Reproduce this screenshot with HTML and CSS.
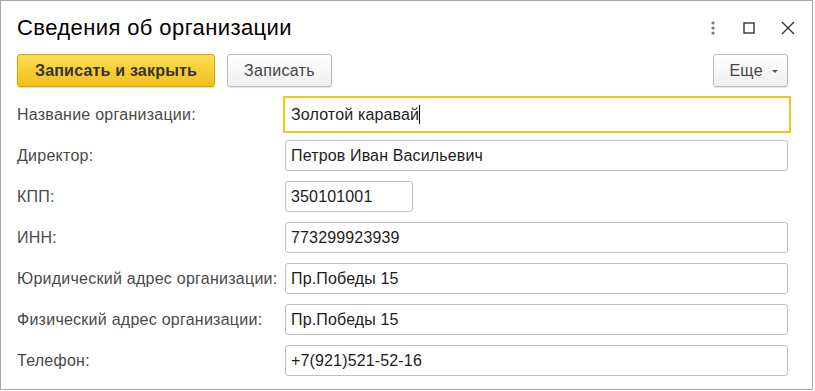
FILE: index.html
```html
<!DOCTYPE html>
<html lang="ru">
<head>
<meta charset="utf-8">
<title>Сведения об организации</title>
<link rel="stylesheet" href="styles.css">
</head>
<body>
<div class="window">
  <div class="header">
    <h1 class="title">Сведения об организации</h1>
    <div class="win-icons">
      <svg class="ico ico-more" width="6" height="14" viewBox="0 0 6 14"><circle cx="3" cy="2" r="1.6"/><circle cx="3" cy="7" r="1.6"/><circle cx="3" cy="12" r="1.6"/></svg>
      <svg class="ico ico-max" width="12" height="12" viewBox="0 0 12 12"><rect x="1" y="1" width="10" height="10" fill="none" stroke="#333" stroke-width="1.4"/></svg>
      <svg class="ico ico-close" width="14" height="14" viewBox="0 0 14 14"><path d="M1 1 L13 13 M13 1 L1 13" stroke="#333" stroke-width="1.3" fill="none"/></svg>
    </div>
  </div>
  <div class="toolbar">
    <button class="btn btn-primary">Записать и закрыть</button>
    <button class="btn btn-save">Записать</button>
    <button class="btn btn-more">Еще <span class="caret"></span></button>
  </div>
  <div class="form">
    <div class="row"><label class="lbl">Название организации:</label><div class="field focused">Золотой каравай<span class="cursor"></span></div></div>
    <div class="row"><label class="lbl">Директор:</label><div class="field">Петров Иван Васильевич</div></div>
    <div class="row"><label class="lbl">КПП:</label><div class="field short">350101001</div></div>
    <div class="row"><label class="lbl">ИНН:</label><div class="field">773299923939</div></div>
    <div class="row"><label class="lbl">Юридический адрес организации:</label><div class="field">Пр.Победы 15</div></div>
    <div class="row"><label class="lbl">Физический адрес организации:</label><div class="field">Пр.Победы 15</div></div>
    <div class="row"><label class="lbl">Телефон:</label><div class="field">+7(921)521-52-16</div></div>
  </div>
</div>
</body>
</html>
```
FILE: styles.css
```css
* { box-sizing: border-box; }
html, body { margin: 0; padding: 0; background: #fff; }
body { font-family: "Liberation Sans", Arial, sans-serif; }

.window {
  width: 813px;
  height: 390px;
  border: 1px solid #a8a8a8;
  background: #fff;
  padding: 7px 24px 0 16px;
}

.header {
  height: 40px;
  display: flex;
  align-items: center;
  justify-content: space-between;
}
.title {
  margin: 0;
  font-weight: normal;
  font-size: 22px;
  letter-spacing: 0.4px;
  color: #000;
  line-height: 40px;
}
.win-icons {
  display: flex;
  align-items: center;
  margin-right: -7px;
}
.ico { display: block; }
.ico-more { fill: #777; margin-right: 27px; }
.ico-max { margin-right: 26px; }

.toolbar {
  margin-top: 6px;
  height: 33px;
  display: flex;
  gap: 12px;
}
.btn {
  font-family: "Liberation Sans", Arial, sans-serif;
  font-size: 16px;
  letter-spacing: 0.3px;
  height: 33px;
  border-radius: 3px;
  padding: 0;
  color: #444;
  cursor: default;
}
.btn-primary {
  width: 198px;
  font-weight: bold;
  letter-spacing: 0.2px;
  color: #333;
  background: linear-gradient(#fcdc55, #f2c01a);
  border: 1px solid #d4a80a;
  box-shadow: 0 1px 1px rgba(0,0,0,0.15);
}
.btn-save {
  width: 105px;
  background: linear-gradient(#ffffff, #efefef);
  border: 1px solid #bcbcbc;
  box-shadow: 0 1px 1px rgba(0,0,0,0.12);
}
.btn-more {
  width: 75px;
  margin-left: auto;
  background: linear-gradient(#ffffff, #efefef);
  border: 1px solid #bcbcbc;
  box-shadow: 0 1px 1px rgba(0,0,0,0.12);
  padding-left: 6px;
  text-align: center;
}
.caret {
  display: inline-block;
  width: 0;
  height: 0;
  border-left: 3px solid transparent;
  border-right: 3px solid transparent;
  border-top: 3px solid #555;
  vertical-align: middle;
  margin-left: 4px;
}

.form {
  margin-top: 12px;
  display: flex;
  flex-direction: column;
  gap: 10px;
}
.row {
  display: flex;
  align-items: center;
  height: 31px;
}
.lbl {
  width: 268px;
  flex: none;
  font-size: 16px;
  letter-spacing: 0.25px;
  color: #4a4a4a;
  white-space: nowrap;
}
.field {
  flex: 1;
  height: 31px;
  border: 1px solid #bfbfbf;
  border-radius: 3px;
  padding: 0 5px;
  font-size: 16px;
  letter-spacing: 0.15px;
  line-height: 29px;
  color: #1d1d1d;
  white-space: nowrap;
  overflow: hidden;
}
.field.short { flex: none; width: 128px; }
.field.focused {
  height: 37px;
  margin: 0 -3px 0 -2px;
  border: 2px solid #f5c518;
  border-radius: 0;
  padding: 0 6px;
  line-height: 33px;
}
.cursor {
  display: inline-block;
  width: 1px;
  height: 19px;
  background: #000;
  vertical-align: -4px;
}
```
